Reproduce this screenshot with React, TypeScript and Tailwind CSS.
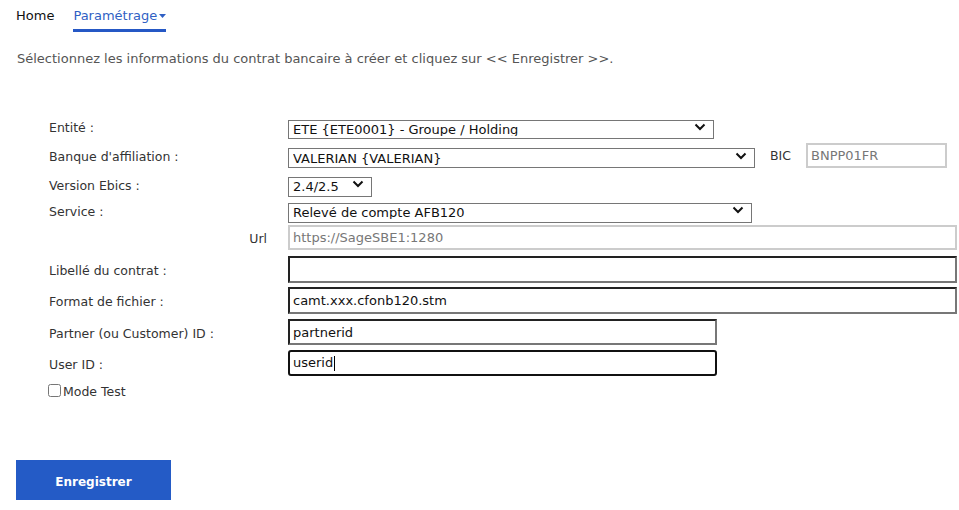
import React from 'react';

const font = { fontFamily: '"DejaVu Sans", Verdana, sans-serif' };

function Chevron() {
  return (
    <svg width="12" height="8" viewBox="0 0 12 8" className="pointer-events-none absolute right-[8px] top-1/2 -translate-y-1/2">
      <path d="M1.5 1.5 L6 6 L10.5 1.5" fill="none" stroke="#111" strokeWidth="2" />
    </svg>
  );
}

function Select({ value, width }: { value: string; width: string }) {
  return (
    <div className={`relative h-full ${width}`}>
      <select
        defaultValue={value}
        className="h-full w-full appearance-none border border-[#767676] bg-white pl-[4px] pr-6 text-[13px] leading-none text-[#111]"
      >
        <option>{value}</option>
      </select>
      <Chevron />
    </div>
  );
}

function Row({ label, className, children, right }: { label: string; className: string; children: React.ReactNode; right?: boolean }) {
  return (
    <div className={`flex items-center ${className}`}>
      <div className={`flex w-[239px] shrink-0 pt-[4px] text-[12.5px] text-[#333] ${right ? 'justify-end pr-[21px]' : ''}`}>{label}</div>
      {children}
    </div>
  );
}

const inset =
  'h-full border-2 border-t-[#222] border-l-[#222] border-b-[#777] border-r-[#777] bg-white px-[3px] text-[13px] text-[#111] outline-none';

export default function App() {
  return (
    <div className="min-h-screen bg-white" style={font}>
      {/* Nav */}
      <nav className="flex items-start gap-[19px] pl-[16px] pt-[5px] text-[13px]">
        <span className="pt-px text-[#111]">Home</span>
        <span className="flex flex-col">
          <span className="flex items-center gap-[2px] pt-px text-[#2f5fc4]">
            Paramétrage
            <svg width="7" height="4" viewBox="0 0 7 4">
              <path d="M0 0 L7 0 L3.5 4 Z" fill="#2f5fc4" />
            </svg>
          </span>
          <span className="mt-[3px] h-[3px] w-[93px] bg-[#2558c5]" />
        </span>
      </nav>

      <p className="pl-[17px] pt-[17px] text-[13px] text-[#555]">
        Sélectionnez les informations du contrat bancaire à créer et cliquez sur &lt;&lt; Enregistrer &gt;&gt;.
      </p>

      {/* Form */}
      <div className="mt-[49px] pl-[49px]">
        <Row label="Entité :" className="h-[19px]">
          <Select value="ETE {ETE0001} - Groupe / Holding" width="w-[426px]" />
        </Row>
        <Row label="Banque d'affiliation :" className="mt-[7px] h-[25px]">
          <div className="h-[20px]">
            <Select value="VALERIAN {VALERIAN}" width="w-[467px]" />
          </div>
          <span className="ml-[15px] pt-[2px] text-[12.5px] text-[#333]">BIC</span>
          <input
            disabled
            defaultValue="BNPP01FR"
            className="ml-[15px] h-full w-[141px] border-2 border-[#ccc] bg-white px-[3px] text-[13px] text-[#777]"
          />
        </Row>
        <Row label="Version Ebics :" className="mt-[6px] h-[20px]">
          <Select value="2.4/2.5" width="w-[84px]" />
        </Row>
        <Row label="Service :" className="mt-[6px] h-[20px]">
          <Select value="Relevé de compte AFB120" width="w-[464px]" />
        </Row>
        <Row label="Url" right className="mt-[5px] h-[25px]">
          <input
            disabled
            defaultValue="https://SageSBE1:1280"
            className="h-full w-[669px] border-2 border-[#ccc] bg-white px-[3px] text-[13px] text-[#777]"
          />
        </Row>
        <Row label="Libellé du contrat :" className="mt-[6px] h-[27px]">
          <input className={`${inset} w-[669px]`} />
        </Row>
        <Row label="Format de fichier :" className="mt-[4px] h-[27px]">
          <input defaultValue="camt.xxx.cfonb120.stm" className={`${inset} w-[669px]`} />
        </Row>
        <Row label="Partner (ou Customer) ID :" className="mt-[5px] h-[26px]">
          <input defaultValue="partnerid" className={`${inset} w-[429px]`} />
        </Row>
        <Row label="User ID :" className="mt-[5px] h-[26px]">
          <div className="flex h-full w-[429px] items-center rounded-[3px] border-2 border-[#111] bg-white px-[3px] text-[13px] text-[#111]">
            userid
            <span className="ml-px h-[15px] w-px bg-black" />
          </div>
        </Row>
        <label className="mt-[8px] flex h-[13px] items-center text-[12.5px] text-[#333]">
          <input type="checkbox" className="-ml-px h-[13px] w-[13px] rounded-[2px]" />
          <span className="ml-[2px] pt-[4px]">Mode Test</span>
        </label>
      </div>

      <div className="pl-[16px] pt-[63px]">
        <button className="h-[40px] w-[155px] bg-[#245bc6] pt-[3px] text-[12px] font-bold text-white">Enregistrer</button>
      </div>
    </div>
  );
}
